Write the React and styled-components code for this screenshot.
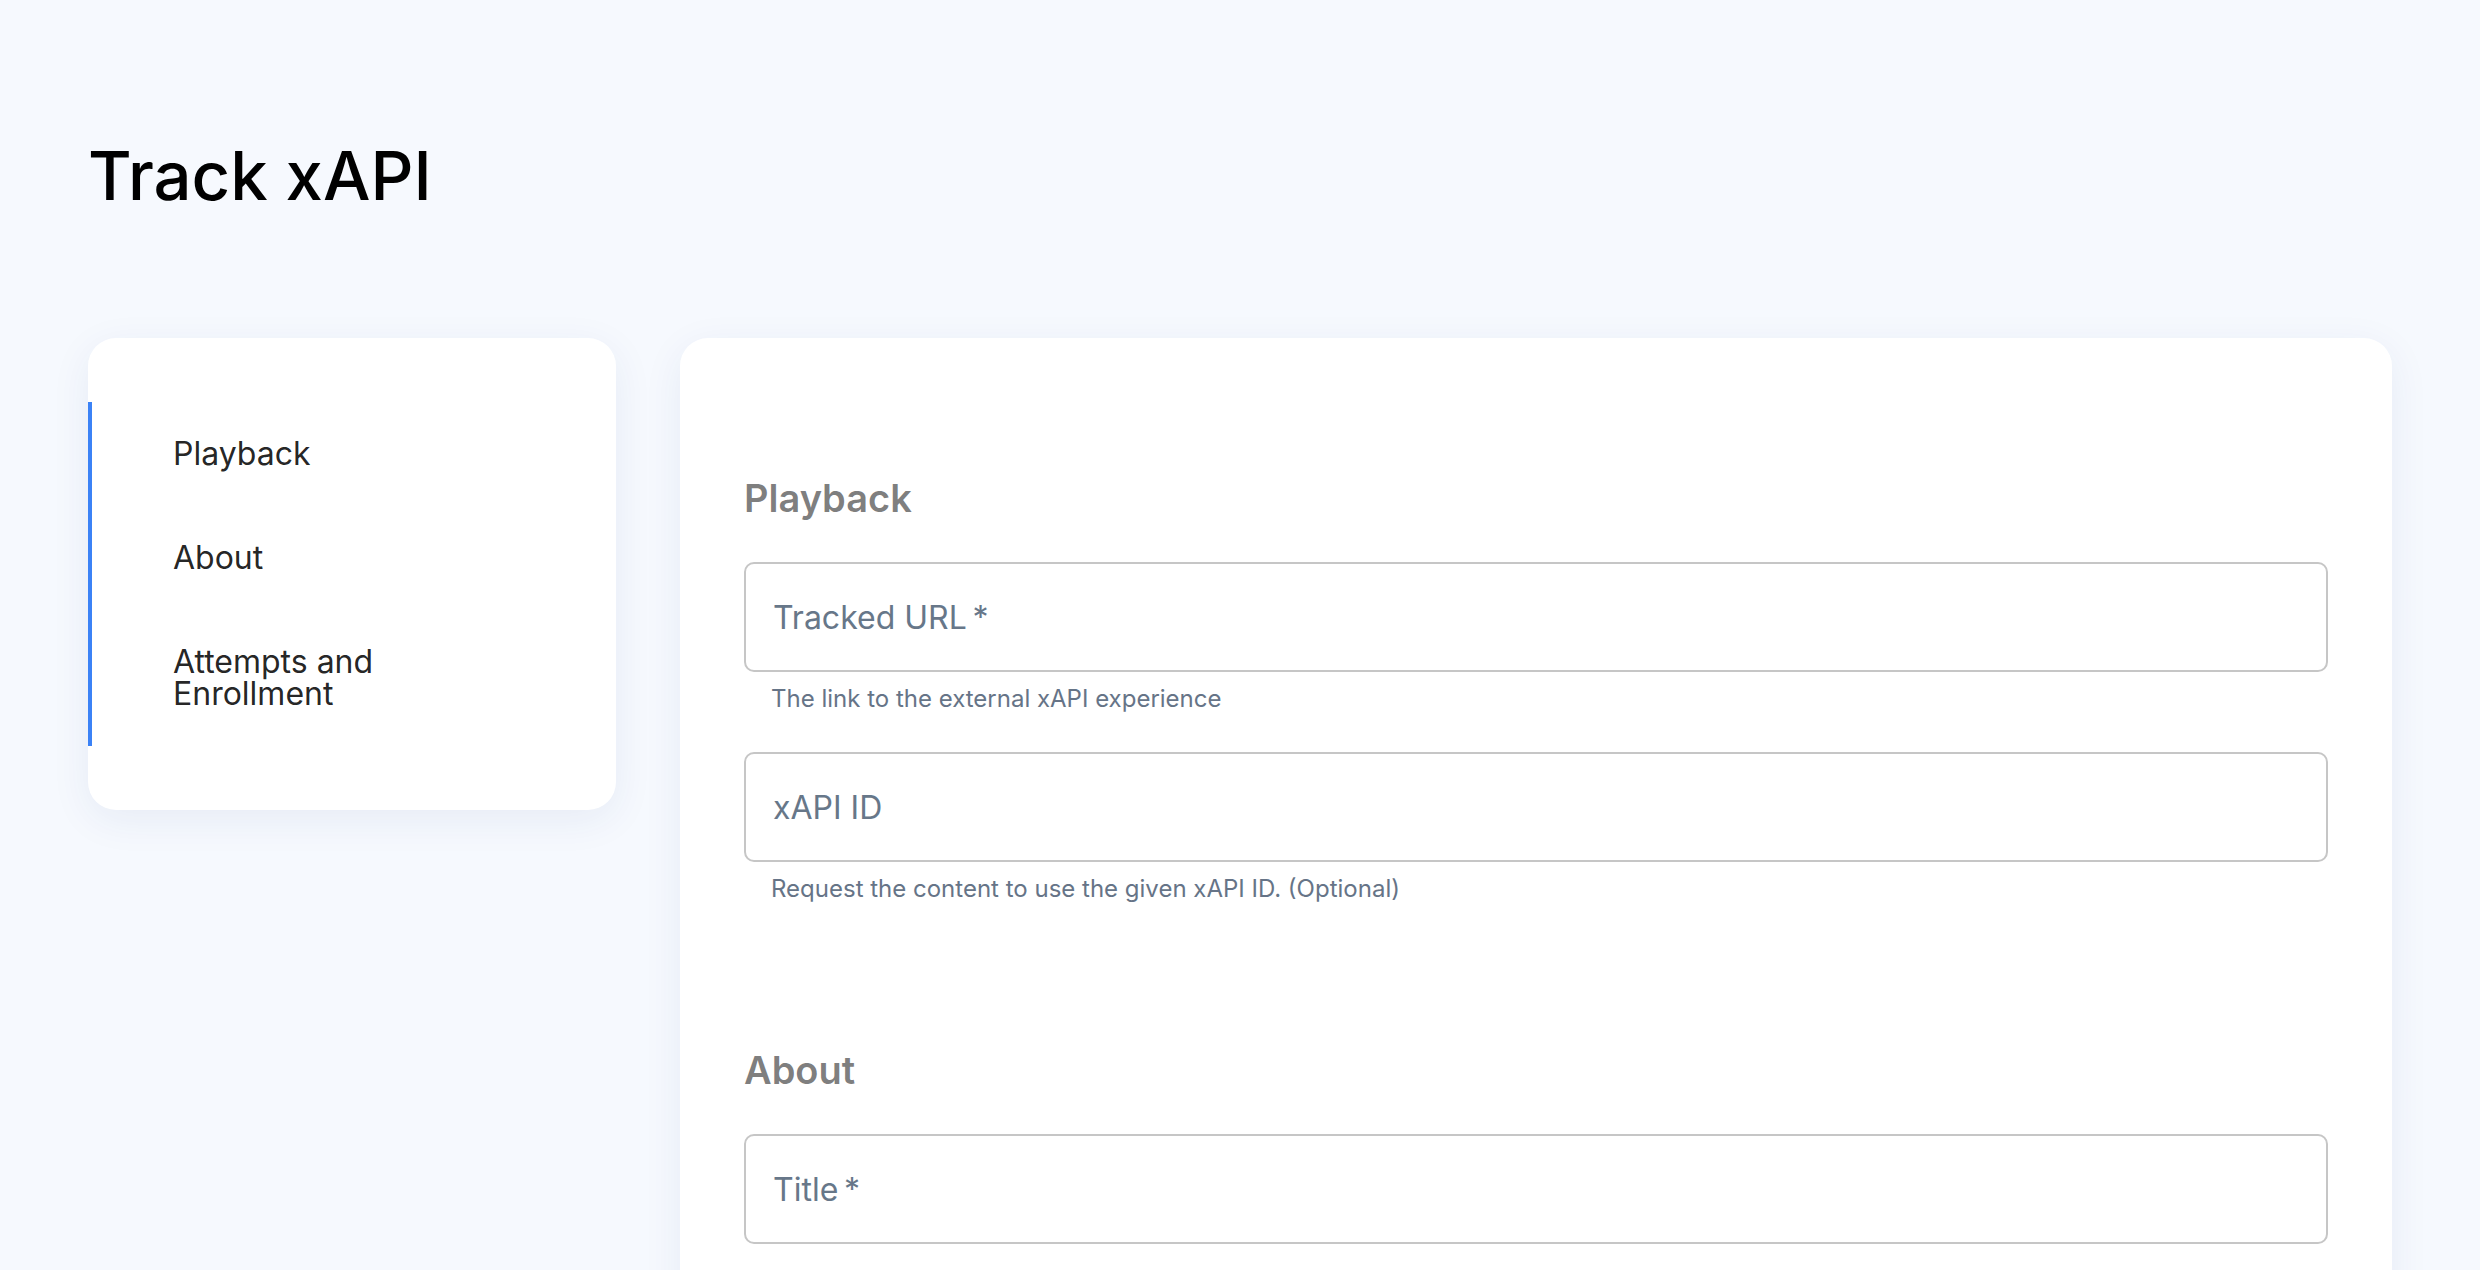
import React from 'react';
import styled, { createGlobalStyle } from 'styled-components';

const GlobalStyle = createGlobalStyle`
    html, body {
        margin: 0;
        padding: 0;
        background: #f6f9fe;
        font-family: Inter, "Noto Sans", "Liberation Sans", sans-serif;
        overflow: hidden;
    }

    * {
        box-sizing: border-box;
    }
`;

const Page = styled.div`
    padding: 136px 88px 0;
`;

const PageTitle = styled.h1`
    margin: 0 0 122px;
    font-size: 67px;
    font-weight: 500;
    line-height: 1.2;
    color: #000;
`;

const Layout = styled.div`
    display: grid;
    grid-template-columns: 528px 1fr;
    gap: 64px;
    align-items: start;
`;

const Card = styled.div`
    background: #fff;
    border-radius: 28px;
    box-shadow: 0 10px 40px rgba(30, 60, 130, 0.07);
`;

const SideCard = styled(Card)`
    padding: 64px 0;
`;

const NavList = styled.ul`
    list-style: none;
    margin: 0;
    padding: 0;
    border-left: 4px solid #3b82f6;
`;

const NavItem = styled.li`
    padding: 36px 85px 36px 81px;
    font-size: 32px;
    line-height: 32px;
    color: rgba(0, 0, 0, 0.87);
    cursor: pointer;
`;

const FormCard = styled(Card)`
    display: flex;
    flex-direction: column;
    gap: 70px;
    padding: 64px 64px 240px;
`;

const Section = styled.section`
    padding-top: 73px;
`;

const SectionTitle = styled.h2`
    margin: 0 0 41px;
    font-size: 38px;
    font-weight: 600;
    line-height: 46px;
    color: rgba(0, 0, 0, 0.52);
`;

const Fields = styled.div`
    display: flex;
    flex-direction: column;
    gap: 38px;
`;

const FieldBox = styled.label`
    display: flex;
    align-items: center;
    height: 110px;
    padding: 0 27px;
    border: 2px solid #c6c6c6;
    border-radius: 10px;
    font-size: 32px;
    color: #677789;
    cursor: text;
`;

const HelperText = styled.p`
    margin: 12px 0 0;
    padding: 0 27px;
    font-size: 24px;
    line-height: 30px;
    color: #667487;
`;

const navItems = ['Playback', 'About', 'Attempts and Enrollment'];

const sections = [
    {
        title: 'Playback',
        fields: [
            { label: 'Tracked URL', required: true, helper: 'The link to the external xAPI experience' },
            { label: 'xAPI ID', helper: 'Request the content to use the given xAPI ID. (Optional)' },
        ],
    },
    {
        title: 'About',
        fields: [{ label: 'Title', required: true }],
    },
];

const Field = ({ label, required, helper }) => (
    <div>
        <FieldBox>
            {label}
            {required && '\u2009*'}
        </FieldBox>
        {helper && <HelperText>{helper}</HelperText>}
    </div>
);

const App = () => {
    return (
        <>
            <GlobalStyle />
            <Page>
                <PageTitle>Track xAPI</PageTitle>
                <Layout>
                    <SideCard as="nav">
                        <NavList>
                            {navItems.map((item) => (
                                <NavItem key={item}>{item}</NavItem>
                            ))}
                        </NavList>
                    </SideCard>
                    <FormCard as="main">
                        {sections.map((section) => (
                            <Section key={section.title}>
                                <SectionTitle>{section.title}</SectionTitle>
                                <Fields>
                                    {section.fields.map((field) => (
                                        <Field key={field.label} {...field} />
                                    ))}
                                </Fields>
                            </Section>
                        ))}
                    </FormCard>
                </Layout>
            </Page>
        </>
    );
};

export default App;
